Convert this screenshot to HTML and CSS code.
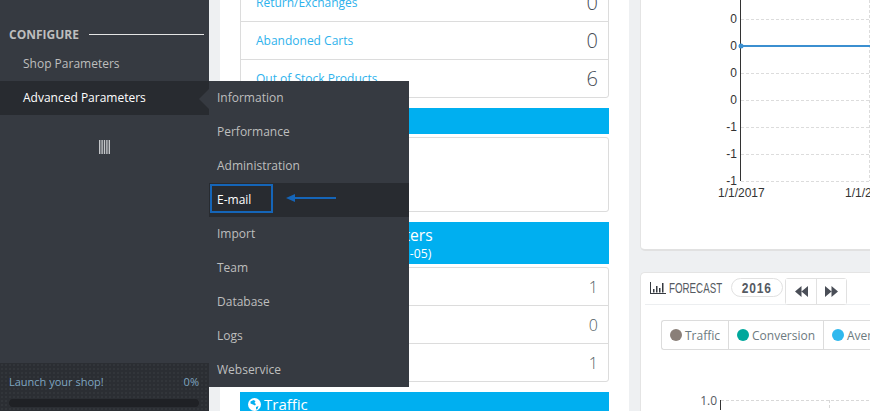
FILE: index.html
```html
<!DOCTYPE html>
<html lang="en">
<head>
<meta charset="utf-8">
<title>Advanced Parameters</title>
<link rel="stylesheet" href="styles.css">
</head>
<body>
<div class="page">
  <aside class="sidebar">
    <div class="nav">
      <div class="nav-heading"><span>CONFIGURE</span><i class="nav-rule"></i></div>
      <a class="nav-item">Shop Parameters</a>
      <a class="nav-item nav-active">Advanced Parameters</a>
      <div class="collapse">
        <svg width="11" height="14" viewBox="0 0 11 14"><path d="M0 0h1.400v14H0zM2.400 0h1.400v14H2.400zM4.800 0h1.400v14H4.800zM7.200 0h1.400v14H7.200zM9.600 0h1.400v14H9.600z" fill="#c4c6c9"/></svg>
      </div>
    </div>
    <div class="launch">
      <div class="launch-text"><span>Launch your shop!</span><span>0%</span></div>
      <div class="launch-track"></div>
    </div>
  </aside>

  <main class="content">
    <section class="left-col">
      <div class="panel-list panel-first">
        <div class="row"><a class="row-link">Return/Exchanges</a><span class="row-val">0</span></div>
        <div class="row"><a class="row-link">Abandoned Carts</a><span class="row-val">0</span></div>
        <div class="row"><a class="row-link">Out of Stock Products</a><span class="row-val">6</span></div>
      </div>
      <div class="bar bar-notif"></div>
      <div class="panel-empty"></div>
      <div class="bar bar-double">
        <div class="bar-title">Customers &amp; Newsletters</div>
        <div class="bar-sub">(from 2016-12-05 to 2017-01-05)</div>
      </div>
      <div class="panel-list panel-second">
        <div class="row"><span class="row-val val-small val-end">1</span></div>
        <div class="row"><span class="row-val val-small val-end">0</span></div>
        <div class="row"><span class="row-val val-small val-end">1</span></div>
      </div>
      <div class="bar bar-traffic">
        <svg class="globe" width="13" height="13" viewBox="0 0 13 13"><circle cx="6.500" cy="6.500" r="6.500" fill="#fff"/><path d="M2.500 3.500l3-1.500 2 1-1 2 1.500 1-1 1.500-2-1-2.500-1zM8 9l2.500-1-1 3-1.500 .5z" fill="#00aff0"/></svg>
        <span>Traffic</span>
      </div>
    </section>

    <section class="right-col">
      <div class="card card-chart">
        <svg class="chart-top" width="230" height="212" viewBox="640 0 230 212">
          <g class="grid">
            <path d="M741 19.500H870M741 73.500H870M741 100.500H870M741 127.500H870M741 154.500H870M741 181.500H870M869.500 0V181"/>
          </g>
          <path d="M740.500 0V181" class="axis"/>
          <path d="M741 46H870" class="series"/>
          <circle cx="741" cy="46" r="2.500" fill="#3b8fd0"/>
          <g class="tick" text-anchor="end">
            <text x="737" y="23">0</text>
            <text x="737" y="50">0</text>
            <text x="737" y="77">0</text>
            <text x="737" y="104">0</text>
            <text x="737" y="131">-1</text>
            <text x="737" y="158">-1</text>
            <text x="737" y="185">-1</text>
          </g>
          <g class="tick">
            <text x="718" y="197">1/1/2017</text>
            <text x="845" y="197">1/1/2017</text>
          </g>
        </svg>
      </div>
      <div class="card card-forecast">
        <div class="fc-head">
          <svg class="fc-icon" width="16" height="12" viewBox="0 0 16 12"><path d="M0 0h1v11h15v1H0zM3 7h1.500v3.500H3zM6 4h1.500v6.500H6zM9 6h1.500v4.500H9zM12 1h1.500v9.500H12z" fill="#363a41"/></svg>
          <span class="fc-title"><span class="fc-title-inner">FORECAST</span></span>
          <span class="fc-year"><span class="fc-year-inner">2016</span></span>
          <div class="fc-btns">
            <button class="fc-btn"><svg width="13" height="11" viewBox="0 0 13 11"><path d="M6.500 0v11L0 5.500zM13 0v11L6.500 5.500z" fill="#4a4e57"/></svg></button>
            <button class="fc-btn"><svg width="13" height="11" viewBox="0 0 13 11"><path d="M0 0v11l6.500-5.500zM6.500 0v11L13 5.500z" fill="#4a4e57"/></svg></button>
          </div>
        </div>
        <div class="fc-tabs">
          <div class="fc-tab tab-a"><i class="dot dot-traffic"></i>Traffic</div>
          <div class="fc-tab tab-b"><i class="dot dot-conv"></i>Conversion</div>
          <div class="fc-tab tab-c"><i class="dot dot-avg"></i>Average Cart Value</div>
        </div>
        <svg class="chart-low" width="230" height="20" viewBox="640 392 230 20">
          <path d="M721 401.500H870M829.500 401V411" class="grid-line"/>
          <path d="M720.500 401V411" class="axis"/>
          <text x="717" y="406" text-anchor="end" class="tick-low">1.0</text>
        </svg>
      </div>
    </section>
  </main>

  <div class="flyout">
    <i class="flyout-notch"></i>
    <a class="fly-item">Information</a>
    <a class="fly-item">Performance</a>
    <a class="fly-item">Administration</a>
    <a class="fly-item fly-active"><span class="fly-mark">E-mail</span>
      <svg class="fly-arrow" width="50" height="8" viewBox="0 0 50 8"><path d="M50 4H8" stroke="#1565b8" stroke-width="2"/><path d="M0 4l9-4v8z" fill="#1565b8"/></svg>
    </a>
    <a class="fly-item">Import</a>
    <a class="fly-item">Team</a>
    <a class="fly-item">Database</a>
    <a class="fly-item">Logs</a>
    <a class="fly-item">Webservice</a>
  </div>
</div>
</body>
</html>
```
FILE: styles.css
```css
* { box-sizing: border-box; }
html, body { margin: 0; padding: 0; height: 100%; overflow: hidden; background: #fff; }
body { font-family: "Open Sans", "Liberation Sans", sans-serif; font-size: 12px; }
.page { position: relative; display: flex; width: 870px; height: 411px; overflow: hidden; }

/* sidebar */
.sidebar { flex: 0 0 209px; height: 411px; background: #363a41; display: flex; flex-direction: column; }
.nav { flex: 1; padding-top: 26px; }
.nav-heading { display: flex; align-items: center; height: 17px; padding: 0 5px 0 9px; color: #bebebe; font-weight: 700; font-size: 12px; }
.nav-rule { flex: 1; height: 1px; margin-left: 10px; background: #e4e4e4; }
.nav-item { display: block; height: 34px; line-height: 34px; padding-left: 23px; color: #bebebe; font-size: 12px; }
.nav-heading + .nav-item { margin-top: 4px; }
.nav-active { background: #282b30; color: #fff; }
.collapse { display: flex; justify-content: center; padding: 25px 0 0; margin-left: -1px; }
.launch { height: 48px; padding: 11px 10px 0 9px; background-color: #2b2e33; background-image: radial-gradient(#3a3d43 .6px, transparent .8px); background-size: 4px 4px; }
.launch-text { display: flex; justify-content: space-between; color: #7fa5c0; font-size: 11px; line-height: 16px; }
.launch-track { height: 8px; margin-top: 9px; border-radius: 4px; background: #1f2125; }

/* flyout */
.flyout { position: absolute; left: 209px; top: 81px; width: 200px; height: 306px; background: #363a41; }
.flyout-notch { position: absolute; left: -10px; top: 8px; width: 0; height: 0; border: solid transparent; border-width: 10px 10px 10px 0; border-right-color: #363a41; }
.fly-item { position: relative; display: flex; align-items: center; height: 34px; padding: 0 0 2px 8px; color: #bebebe; font-size: 12px; }
.fly-active { background: #282b30; color: #fff; }
.fly-mark { position: absolute; left: 1px; top: 1px; width: 63px; height: 29px; padding-left: 5px; line-height: 27px; border: 2px solid #1565b8; }
.fly-arrow { position: absolute; left: 77px; top: 11px; }

/* content */
.content { flex: 1; display: flex; background: #eef0f2; padding: 0 0 0 11px; min-width: 0; }
.left-col { flex: 0 0 409px; height: 411px; padding: 0 20px; background: #fff; overflow: hidden; }
.panel-list { background: #fff; border: 1px solid #dcdcdc; border-radius: 3px; }
.panel-first { margin-top: -17px; }
.row { display: flex; align-items: center; justify-content: space-between; height: 38px; padding: 0 10px 0 15px; border-bottom: 1px solid #dcdcdc; }
.row:last-child { border-bottom: 0; height: 37px; }
.row-link { color: #2eb2ec; font-size: 12px; }
.row-val { color: #484e57; font-size: 20px; font-weight: 300; line-height: 1; }
.val-small { font-size: 16px; color: #4f5c63; }
.val-end { margin-left: auto; }
.bar { background: #00aff0; color: #fff; padding-left: 8px; }
.bar-notif { height: 26px; margin-top: 10px; }
.panel-empty { height: 75px; margin-top: 3px; border: 1px solid #dcdcdc; border-radius: 3px; }
.bar-double { height: 42px; margin-top: 10px; padding-top: 4px; white-space: nowrap; }
.bar-title { font-size: 15.600px; line-height: 19px; }
.bar-sub { font-size: 12.200px; line-height: 17px; }
.panel-second { margin-top: 3px; }
.bar-traffic { display: flex; align-items: center; gap: 3px; height: 26px; margin-top: 10px; padding-bottom: 2px; font-size: 15px; }
.globe { flex: none; }

/* right */
.right-col { flex: 1; padding: 0 0 0 11px; display: flex; flex-direction: column; gap: 21px; overflow: hidden; }
.card { width: 260px; background: #fff; border-left: 1px solid #e4e4e4; }
.card-chart { height: 251px; border-bottom: 2px solid #e1e1e1; border-radius: 0 0 0 5px; }
.chart-top { display: block; margin-left: -1px; }
.grid path { fill: none; stroke: #dcdcdc; stroke-dasharray: 3 2; }
.axis { fill: none; stroke: #333; stroke-width: 1; }
.series { fill: none; stroke: #3b8fd0; stroke-width: 2; }
.tick text { font-family: "Liberation Sans", Arial, sans-serif; font-size: 12px; fill: #333; }
.card-forecast { flex: 1; border-top: 1px solid #e4e4e4; border-radius: 5px 0 0 0; }
.fc-head { display: flex; align-items: flex-start; height: 32px; margin-left: 4px; padding: 5px 0 0 5px; border-bottom: 1px solid #eceef0; }
.fc-icon { margin: 4px 3px 0 0; flex: none; }
.fc-title { flex: none; width: 53px; font-family: "Liberation Sans", sans-serif; font-size: 15px; line-height: 20px; color: #555a62; white-space: nowrap; }
.fc-title-inner { display: inline-block; transform: scaleX(.65); transform-origin: 0 50%; }
.fc-year { flex: none; display: flex; justify-content: center; margin-left: 9px; width: 52px; height: 19px; line-height: 17px; border: 1px solid #e1e1e1; border-radius: 10px; font-family: "Liberation Sans", sans-serif; font-weight: 700; font-size: 15px; letter-spacing: 1px; color: #555a62; }
.fc-year-inner { display: inline-block; transform: scaleX(.8); }
.fc-btns { display: flex; flex: none; margin-left: 2px; height: 27px; border: 1px solid #e1e1e1; border-radius: 3px; background: #fff; }
.fc-btn { display: flex; align-items: center; justify-content: center; width: 30px; padding: 0; background: #fff; border: 0; }
.fc-btn + .fc-btn { border-left: 1px solid #e1e1e1; }
.fc-tabs { display: flex; height: 30px; width: 260px; margin: 15px 0 0 20px; border: 1px solid #dcdcdc; border-right: 0; border-radius: 3px 0 0 3px; }
.fc-tab { display: flex; flex: none; align-items: center; gap: 3px; padding-left: 8px; color: #6c7a80; font-size: 12px; white-space: nowrap; border-right: 1px solid #dcdcdc; }
.tab-a { width: 67px; }
.tab-b { width: 95px; }
.tab-c { border-right: 0; }
.dot { flex: none; width: 12px; height: 12px; border-radius: 50%; }
.dot-traffic { background: #8a7f78; }
.dot-conv { background: #00a89c; }
.dot-avg { background: #2fb8ee; }
.chart-low { display: block; margin: 41px 0 0 -1px; }
.grid-line { fill: none; stroke: #d8d8d8; stroke-dasharray: 3 2; }
.tick-low { font-family: "Open Sans", sans-serif; font-size: 12px; fill: #555a62; }
```
